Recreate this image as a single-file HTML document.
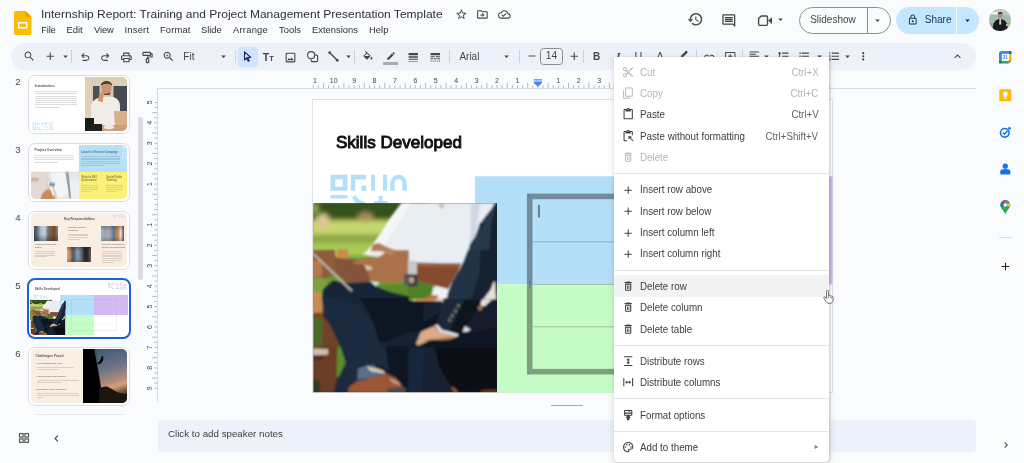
<!DOCTYPE html>
<html lang="en"><head><meta charset="utf-8"><title>Internship Report: Training and Project Management Presentation Template - Google Slides</title>
<style>
*{box-sizing:border-box;margin:0;padding:0}
html,body{width:1024px;height:463px;overflow:hidden;background:#f9fbfd}
body{position:relative;font-family:"Liberation Sans",Arial,sans-serif;color:#444746;-webkit-font-smoothing:antialiased}
#app{position:absolute;left:0;top:0;width:1024px;height:463px;overflow:hidden;will-change:transform}
.abs,.ic,.t{position:absolute}
.ic{display:block;overflow:visible}
.t{white-space:pre;line-height:1}
#title{left:40.8px;top:9.3px;font-size:11.2px;color:#303134;transform-origin:0 50%;transform:scaleX(1.0733)}
.menu{top:25.3px;font-size:9.4px;color:#303134}
#toolbar{left:11px;top:43px;width:965px;height:27px;border-radius:13.5px;background:#edf2fa}
.sep{position:absolute;top:50.4px;width:1px;height:12.6px;background:#cdd1d6}
.tb{font-size:9.6px;color:#444746}
.thumb{position:absolute;left:28.2px;width:101.6px;height:59px;border:1px solid #dadce0;border-radius:7px;background:#fff;overflow:hidden}
.thumb .in{position:absolute;left:1.4px;top:1.4px;right:1.4px;bottom:1.4px;border-radius:5px;overflow:hidden;background:#fff}
.num{position:absolute;left:10px;width:16px;text-align:center;font-size:9.6px;color:#444746;line-height:1}
.tiny{position:absolute;white-space:pre;line-height:1;color:#555}
#cm{position:absolute;left:614.2px;top:56.5px;width:214.8px;height:405px;background:#fff;border-radius:0 0 4px 4px;box-shadow:0 1px 2px rgba(60,64,67,.18),0 2px 6px 2px rgba(60,64,67,.09),1.5px 0 1.5px rgba(60,64,67,.1)}
.mi{position:absolute;left:0;width:100%;height:21.3px}
.mi .lab{position:absolute;left:25.9px;top:5.6px;font-size:10.6px;line-height:1;white-space:pre;color:#3c4043;transform-origin:0 50%;transform:scaleX(.923)}
.mi .sc{position:absolute;right:10.4px;top:5.6px;font-size:10.6px;line-height:1;white-space:pre;color:#5f6368;transform-origin:100% 50%;transform:scaleX(.92)}
.mi.dis .lab,.mi.dis .sc{color:#b1b5ba}
.mi.hl{background:#f1f3f4}
.msep{position:absolute;left:0;width:100%;height:1px;background:#e4e5e7}
</style></head>
<body>
<div id="app">
<!-- header -->
<svg class="ic" style="left:14px;top:10.5px;width:17.5px;height:24px" viewBox="0 0 35 48"><path d="M3.500 0H23l12 12v32.500A3.500 3.500 0 0 1 31.500 48h-28A3.500 3.500 0 0 1 0 44.500v-41A3.500 3.500 0 0 1 3.500 0z" fill="#fbbc04"/><path d="M23 0l12 12H26.500A3.500 3.500 0 0 1 23 8.500z" fill="#f29900"/><path d="M8 22h19v13H8z M10.800 24.800v7.400h13.400v-7.400z" fill="#fff" fill-rule="evenodd"/></svg>
<div class="t" id="title">Internship Report: Training and Project Management Presentation Template</div>
<div class="t menu" style="left:41.2px;letter-spacing:-0.152px">File</div>
<div class="t menu" style="left:66.5px;letter-spacing:-0.039px">Edit</div>
<div class="t menu" style="left:94px;letter-spacing:-0.102px">View</div>
<div class="t menu" style="left:124.5px;letter-spacing:0.216px">Insert</div>
<div class="t menu" style="left:160px;letter-spacing:0.133px">Format</div>
<div class="t menu" style="left:201px;letter-spacing:-0.022px">Slide</div>
<div class="t menu" style="left:233px;letter-spacing:0.234px">Arrange</div>
<div class="t menu" style="left:279px;letter-spacing:0.022px">Tools</div>
<div class="t menu" style="left:312px;letter-spacing:0.014px">Extensions</div>
<div class="t menu" style="left:369px;letter-spacing:0.055px">Help</div>
<svg class="ic" style="left:454.60px;top:8.10px;width:12.8px;height:12.8px" viewBox="0 0 24 24"><path fill="#444746" d="M22 9.24l-7.19-.62L12 2 9.19 8.63 2 9.24l5.46 4.73L5.82 21 12 17.27 18.18 21l-1.63-7.03L22 9.24zM12 15.4l-3.76 2.27 1-4.28-3.32-2.88 4.38-.38L12 6.1l1.71 4.04 4.38.38-3.32 2.88 1 4.28L12 15.4z"/></svg>
<svg class="ic" style="left:476.20px;top:8.20px;width:12.8px;height:12.8px" viewBox="0 0 24 24"><path fill="#444746" d="M20 6h-8l-2-2H4c-1.1 0-1.99.9-1.99 2L2 18c0 1.1.9 2 2 2h16c1.1 0 2-.9 2-2V8c0-1.1-.9-2-2-2zm0 12H4V6h5.17l2 2H20v10zm-8-1l4-4-4-4v3H8v2h4v3z"/></svg>
<svg class="ic" style="left:497.60px;top:8.20px;width:12.8px;height:12.8px" viewBox="0 0 24 24"><path fill="#444746" d="M19.35 10.04C18.67 6.59 15.64 4 12 4 9.11 4 6.6 5.64 5.35 8.04 2.34 8.36 0 10.91 0 14c0 3.31 2.69 6 6 6h13c2.76 0 5-2.24 5-5 0-2.64-2.05-4.78-4.65-4.96zM19 18H6c-2.21 0-4-1.79-4-4 0-2.05 1.53-3.76 3.56-3.97l1.07-.11.5-.95C8.08 7.14 9.94 6 12 6c2.62 0 4.88 1.86 5.39 4.43l.3 1.5 1.53.11c1.56.1 2.78 1.41 2.78 2.96 0 1.65-1.35 3-3 3zm-9-3.82l-2.09-2.09L6.5 13.5 10 17l6.01-6.01-1.41-1.41z"/></svg>
<svg class="ic" style="left:687.30px;top:11.30px;width:16.6px;height:16.6px" viewBox="0 0 24 24"><path fill="#444746" d="M13 3c-4.97 0-9 4.03-9 9H1l3.89 3.89.07.14L9 12H6c0-3.87 3.13-7 7-7s7 3.13 7 7-3.13 7-7 7c-1.93 0-3.68-.79-4.94-2.06l-1.42 1.42C8.27 19.99 10.51 21 13 21c4.97 0 9-4.03 9-9s-4.03-9-9-9zm-1 5v5l4.28 2.54.72-1.21-3.5-2.08V8H12z"/></svg>
<svg class="ic" style="left:720.80px;top:12.80px;width:15.6px;height:15.6px" viewBox="0 0 24 24"><path fill="#444746" d="M21.99 4c0-1.1-.89-2-1.99-2H4c-1.1 0-2 .9-2 2v12c0 1.1.9 2 2 2h14l4 4-.01-18zM20 4v13.17L18.83 16H4V4h16zM6 12h12v2H6zm0-3h12v2H6zm0-3h12v2H6z"/></svg>
<svg class="ic" style="left:756px;top:13px;width:18px;height:15px" viewBox="756 13 18 15"><path d="M761.200 16H766.300Q767.500 16 767.500 17.200V24.100Q767.500 25.300 766.300 25.300H759.800Q758.600 25.300 758.600 24.100V18.600Z" fill="none" stroke="#444746" stroke-width="1.350" stroke-linejoin="round"/><path d="M768.100 20.500L772 17.300V23.900Z" fill="#444746"/></svg>
<svg class="ic" style="left:775.20px;top:14.30px;width:11px;height:11px" viewBox="0 0 24 24"><path fill="#444746" d="M7 10l5 5 5-5z"/></svg>
<div class="abs" style="left:799.2px;top:6.8px;width:91.4px;height:26.6px;border:1px solid #8e918f;border-radius:13.5px;height:27px"></div>
<div class="abs" style="left:866.6px;top:7px;width:1px;height:26px;background:#8e918f"></div>
<div class="t" style="left:810.2px;top:15.1px;font-size:10px;color:#444746">Slideshow</div>
<svg class="ic" style="left:872.20px;top:14.50px;width:11px;height:11px" viewBox="0 0 24 24"><path fill="#444746" d="M7 10l5 5 5-5z"/></svg>
<div class="abs" style="left:896.2px;top:6.8px;width:82.6px;height:27px;border-radius:13.5px;background:#c2e7ff"></div>
<div class="abs" style="left:956px;top:6.8px;width:1px;height:27px;background:#f9fbfd"></div>
<svg class="ic" style="left:907.15px;top:14.05px;width:11.5px;height:11.5px" viewBox="0 0 24 24"><path fill="#22364e" d="M18 8h-1V6c0-2.76-2.24-5-5-5S7 3.24 7 6v2H6c-1.1 0-2 .9-2 2v10c0 1.1.9 2 2 2h12c1.1 0 2-.9 2-2V10c0-1.1-.9-2-2-2zM9 6c0-1.66 1.34-3 3-3s3 1.34 3 3v2H9V6zm9 14H6V10h12v10zm-6-3c1.1 0 2-.9 2-2s-.9-2-2-2-2 .9-2 2 .9 2 2 2z"/></svg>
<div class="t" style="left:924.8px;top:15.1px;font-size:10px;color:#22364e">Share</div>
<svg class="ic" style="left:961.80px;top:14.70px;width:11px;height:11px" viewBox="0 0 24 24"><path fill="#12263e" d="M7 10l5 5 5-5z"/></svg>
<svg class="ic" style="left:989px;top:9.300px;width:22px;height:22px" viewBox="0 0 22 22"><defs><clipPath id="av"><circle cx="11" cy="11" r="10.900"/></clipPath><filter id="avb"><feGaussianBlur stdDeviation="0.450"/></filter></defs><g clip-path="url(#av)"><rect width="22" height="22" fill="#a3bdb2"/><g filter="url(#avb)"><rect x="0" y="0" width="22" height="6" fill="#b9cfc6"/><rect x="2" y="3" width="7" height="2.200" fill="#eef1ee"/><rect x="0" y="14" width="22" height="8" fill="#8fa79c"/><path d="M3.500 22c0-8 2.500-12 7.700-12s7.700 4 7.700 12z" fill="#1c1e21"/><ellipse cx="11.200" cy="6.300" rx="2.300" ry="3" fill="#b48a72"/><path d="M8.800 5.300c0-3.200 4.800-3.200 4.800 0c-1-1-3.800-1-4.800 0z" fill="#2a2320"/><path d="M10.500 9.600h1.500l.3 6h-2.100z" fill="#c9ccd0"/><rect x="17" y="15" width="3" height="2" fill="#d8c060"/></g></g></svg>
<!-- toolbar -->
<div class="abs" id="toolbar"></div>
<div class="abs" style="left:238px;top:47px;width:19.600px;height:19.600px;border-radius:3.500px;background:#d3e3fd"></div>
<div class="sep" style="left:71.0px"></div>
<div class="sep" style="left:234.5px"></div>
<div class="sep" style="left:354.4px"></div>
<div class="sep" style="left:448.8px"></div>
<div class="sep" style="left:518.8px"></div>
<div class="sep" style="left:583.1px"></div>
<div class="sep" style="left:696.0px"></div>
<div class="sep" style="left:741.9px"></div>
<svg class="ic" style="left:22.55px;top:50.15px;width:12.5px;height:12.5px" viewBox="0 0 24 24"><path fill="#444746" d="M15.5 14h-.79l-.28-.27C15.41 12.59 16 11.11 16 9.5 16 5.91 13.09 3 9.5 3S3 5.91 3 9.5 5.91 16 9.5 16c1.61 0 3.09-.59 4.23-1.57l.27.28v.79l5 4.99L20.49 19l-4.99-5zm-6 0C7.01 14 5 11.99 5 9.5S7.01 5 9.5 5 14 7.01 14 9.5 11.99 14 9.5 14z"/></svg>
<svg class="ic" style="left:44.35px;top:50.15px;width:12.5px;height:12.5px" viewBox="0 0 24 24"><path fill="#444746" d="M19 13h-6v6h-2v-6H5v-2h6V5h2v6h6v2z"/></svg>
<svg class="ic" style="left:59.50px;top:50.90px;width:11px;height:11px" viewBox="0 0 24 24"><path fill="#444746" d="M7 10l5 5 5-5z"/></svg>
<svg class="ic" style="left:78.55px;top:50.55px;width:12.5px;height:12.5px" viewBox="0 0 24 24"><path fill="#444746" d="M7 19v-2h7.1q1.575 0 2.738-1T18 13.5 16.838 11 14.1 10H7.8l2.6 2.6L9 14 4 9l5-5 1.4 1.4L7.8 8h6.3q2.425 0 4.163 1.575T20 13.5t-1.737 3.925T14.1 19z"/></svg>
<svg class="ic" style="left:99.15px;top:50.55px;width:12.5px;height:12.5px" viewBox="0 0 24 24"><path fill="#444746" d="M17 19v-2H9.9q-1.575 0-2.738-1T6 13.5 7.163 11 9.9 10h6.3l-2.6 2.6L15 14l5-5-5-5-1.4 1.4L16.2 8H9.9Q7.475 8 5.738 9.575T4 13.5t1.737 3.925T9.9 19z"/></svg>
<svg class="ic" style="left:120.20px;top:50.50px;width:12.8px;height:12.8px" viewBox="0 0 24 24"><path fill="#444746" d="M19 8h-1V3H6v5H5c-1.66 0-3 1.34-3 3v6h4v4h12v-4h4v-6c0-1.66-1.34-3-3-3zM8 5h8v3H8V5zm8 12v2H8v-4h8v2zm2-2v-2H6v2H4v-4c0-.55.45-1 1-1h14c.55 0 1 .45 1 1v4h-2z M17 11.5a1 1 0 1 0 2 0a1 1 0 1 0-2 0z"/></svg>
<svg class="ic" style="left:140.7px;top:50.6px;width:13px;height:13px" viewBox="0 0 24 24"><g fill="none" stroke="#444746" stroke-width="2.100" stroke-linejoin="round"><rect x="3.500" y="2.500" width="14" height="5.500" rx="1.300"/><path d="M17.500 5.200H20.500V11H12V14"/><rect x="9.800" y="14" width="4.400" height="7.500" rx="1.200"/></g></svg>
<svg class="ic" style="left:162.40px;top:50.20px;width:13px;height:13px" viewBox="0 0 24 24"><path fill="#444746" d="M15.5 14h-.79l-.28-.27C15.41 12.59 16 11.11 16 9.5 16 5.91 13.09 3 9.5 3S3 5.91 3 9.5 5.91 16 9.5 16c1.61 0 3.09-.59 4.23-1.57l.27.28v.79l5 4.99L20.49 19l-4.99-5zm-6 0C7.01 14 5 11.99 5 9.5S7.01 5 9.5 5 14 7.01 14 9.5 11.99 14 9.5 14zm.5-7H9v2H7v1h2v2h1v-2h2V9h-2z"/></svg>
<div class="t tb" style="left:183.300px;top:52px;font-size:10.200px">Fit</div>
<svg class="ic" style="left:217.50px;top:50.90px;width:11px;height:11px" viewBox="0 0 24 24"><path fill="#444746" d="M7 10l5 5 5-5z"/></svg>
<svg class="ic" style="left:241.1px;top:50.4px;width:13px;height:13px" viewBox="0 0 24 24"><path d="M6.500 3.500v15l4-3.800 2.800 6 2-.9-2.800-6H18z" fill="none" stroke="#1b2a6b" stroke-width="2.200" stroke-linejoin="round"/></svg>
<div class="t" style="left:262.800px;top:51.600px;font-size:10.600px;font-weight:bold;color:#444746">T<span style="font-size:7.600px">T</span></div>
<svg class="ic" style="left:283.50px;top:50.60px;width:13px;height:13px" viewBox="0 0 24 24"><path fill="#444746" d="M19 5v14H5V5h14m0-2H5c-1.1 0-2 .9-2 2v14c0 1.1.9 2 2 2h14c1.1 0 2-.9 2-2V5c0-1.1-.9-2-2-2zm-4.86 8.86l-3 3.87L9 13.14 6 17h12l-3.86-5.14z"/></svg>
<svg class="ic" style="left:305.9px;top:49.9px;width:13px;height:13px" viewBox="0 0 24 24"><circle cx="9.500" cy="9.500" r="6.500" fill="none" stroke="#444746" stroke-width="2"/><path d="M17 9.500h2.500a2 2 0 0 1 2 2v8a2 2 0 0 1-2 2h-8a2 2 0 0 1-2-2V17" fill="none" stroke="#444746" stroke-width="2"/></svg>
<svg class="ic" style="left:327.1px;top:49.9px;width:13px;height:13px" viewBox="0 0 24 24"><path d="M5 5L19 19" stroke="#444746" stroke-width="2.600"/><circle cx="5" cy="5" r="2.600" fill="#444746"/><circle cx="19" cy="19" r="2.600" fill="#444746"/></svg>
<svg class="ic" style="left:342.70px;top:50.90px;width:11px;height:11px" viewBox="0 0 24 24"><path fill="#444746" d="M7 10l5 5 5-5z"/></svg>
<svg class="ic" style="left:362.00px;top:51.00px;width:12px;height:12px" viewBox="0 0 24 24"><path fill="#444746" d="M16.56 8.94L7.62 0 6.21 1.41l2.38 2.38-5.15 5.15c-.59.59-.59 1.54 0 2.12l5.5 5.5c.29.29.68.44 1.06.44s.77-.15 1.06-.44l5.5-5.5c.59-.58.59-1.53 0-2.12zM5.21 10L10 5.21 14.79 10H5.21zM19 11.5s-2 2.17-2 3.5c0 1.1.9 2 2 2s2-.9 2-2c0-1.33-2-3.5-2-3.5z"/></svg>
<svg class="ic" style="left:385.80px;top:50.90px;width:10px;height:10px" viewBox="0 0 24 24"><path fill="#444746" d="M3 17.25V21h3.75L17.81 9.94l-3.75-3.75L3 17.25zM20.71 7.04c.39-.39.39-1.02 0-1.41l-2.34-2.34c-.39-.39-1.02-.39-1.41 0l-1.83 1.83 3.75 3.75 1.83-1.83z"/></svg>
<div class="abs" style="left:383.200px;top:62.200px;width:15px;height:2.400px;background:#a9acb0"></div>
<svg class="ic" style="left:406.95px;top:50.75px;width:12.5px;height:12.5px" viewBox="0 0 24 24"><path fill="#444746" d="M3 17h18v-2H3v2zm0 3h18v-1H3v1zm0-7h18v-3H3v3zm0-9v4h18V4H3z"/></svg>
<svg class="ic" style="left:429.35px;top:50.75px;width:12.5px;height:12.5px" viewBox="0 0 24 24"><path fill="#444746" d="M3 16h5v-2H3v2zm6.5 0h5v-2h-5v2zm6.5 0h5v-2h-5v2zM3 20h2v-2H3v2zm4 0h2v-2H7v2zm4 0h2v-2h-2v2zm4 0h2v-2h-2v2zm4 0h2v-2h-2v2zM3 12h8v-2H3v2zm10 0h8v-2h-8v2zM3 4v4h18V4H3z"/></svg>
<div class="t tb" style="left:459.400px;top:51.500px;font-size:10px">Arial</div>
<svg class="ic" style="left:501.10px;top:50.50px;width:11px;height:11px" viewBox="0 0 24 24"><path fill="#444746" d="M7 10l5 5 5-5z"/></svg>
<svg class="ic" style="left:525.50px;top:50.40px;width:12px;height:12px" viewBox="0 0 24 24"><path fill="#444746" d="M19 13H5v-2h14v2z"/></svg>
<div class="abs" style="left:540px;top:48.200px;width:22.800px;height:16.400px;border:1px solid #8a8d90;border-radius:3.500px"></div>
<div class="t tb" style="left:540px;top:51.300px;width:22.800px;text-align:center;font-size:10.200px">14</div>
<svg class="ic" style="left:567.75px;top:50.15px;width:12.5px;height:12.5px" viewBox="0 0 24 24"><path fill="#444746" d="M19 13h-6v6h-2v-6H5v-2h6V5h2v6h6v2z"/></svg>
<div class="t" style="left:592.900px;top:51.700px;font-size:10px;font-weight:bold;color:#444746">B</div>
<div class="t" style="left:616.200px;top:51.200px;font-size:10.800px;font-style:italic;font-family:'Liberation Serif',serif;font-weight:bold;color:#444746">I</div>
<div class="t" style="left:634.600px;top:51.200px;font-size:10.800px;text-decoration:underline;color:#444746">U</div>
<div class="t" style="left:656.600px;top:50.600px;font-size:10.800px;color:#444746">A</div>
<svg class="ic" style="left:677.25px;top:49.15px;width:12.5px;height:12.5px" viewBox="0 0 24 24"><path fill="#444746" d="M17.750 3 21 6.250 10.500 16.750 7.250 13.500zM6.200 14.600l3.200 3.200-1.600 1.600H4.600l-.8-.8z"/></svg>
<svg class="ic" style="left:702.75px;top:50.65px;width:12.5px;height:12.5px" viewBox="0 0 24 24"><path fill="#444746" d="M3.9 12c0-1.71 1.39-3.1 3.1-3.1h4V7H7c-2.76 0-5 2.24-5 5s2.24 5 5 5h4v-1.9H7c-1.71 0-3.1-1.39-3.1-3.1zM8 13h8v-2H8v2zm9-6h-4v1.9h4c1.71 0 3.1 1.39 3.1 3.1s-1.39 3.1-3.1 3.1h-4V17h4c2.76 0 5-2.24 5-5s-2.24-5-5-5z"/></svg>
<svg class="ic" style="left:723.75px;top:50.65px;width:12.5px;height:12.5px" viewBox="0 0 24 24"><path fill="#444746" d="M20 2H4c-1.1 0-2 .9-2 2v12c0 1.1.9 2 2 2h14l4 4V4c0-1.1-.9-2-2-2zm0 15.17L18.83 16H4V4h16v13.17zM11 14h2v-3h3V9h-3V6h-2v3H8v2h3z"/></svg>
<svg class="ic" style="left:748.25px;top:50.15px;width:12.5px;height:12.5px" viewBox="0 0 24 24"><path fill="#444746" d="M15 15H3v2h12v-2zm0-8H3v2h12V7zM3 13h18v-2H3v2zm0 8h18v-2H3v2zM3 3v2h18V3H3z"/></svg>
<svg class="ic" style="left:761.00px;top:50.90px;width:11px;height:11px" viewBox="0 0 24 24"><path fill="#444746" d="M7 10l5 5 5-5z"/></svg>
<svg class="ic" style="left:776.75px;top:50.15px;width:12.5px;height:12.5px" viewBox="0 0 24 24"><path fill="#444746" d="M6 7h2.5L5 3.5 1.5 7H4v10H1.5L5 20.5 8.5 17H6V7zm4-2v2h12V5H10zm0 14h12v-2H10v2zm0-6h12v-2H10v2z"/></svg>
<svg class="ic" style="left:797.75px;top:50.15px;width:12.5px;height:12.5px" viewBox="0 0 24 24"><path fill="#444746" d="M4 10.5c-.83 0-1.5.67-1.5 1.5s.67 1.5 1.5 1.5 1.5-.67 1.5-1.5-.67-1.5-1.5-1.5zm0-6c-.83 0-1.5.67-1.5 1.5S3.17 7.5 4 7.5 5.5 6.83 5.5 6 4.83 4.5 4 4.5zm0 12c-.83 0-1.5.68-1.5 1.5s.68 1.5 1.5 1.5 1.5-.68 1.5-1.5-.67-1.5-1.5-1.5zM7 19h14v-2H7v2zm0-6h14v-2H7v2zm0-8v2h14V5H7z"/></svg>
<svg class="ic" style="left:813.50px;top:50.90px;width:11px;height:11px" viewBox="0 0 24 24"><path fill="#444746" d="M7 10l5 5 5-5z"/></svg>
<svg class="ic" style="left:828.05px;top:50.15px;width:12.5px;height:12.5px" viewBox="0 0 24 24"><path fill="#444746" d="M2 17h2v.5H3v1h1v.5H2v1h3v-4H2v1zm1-9h1V4H2v1h1v3zm-1 3h1.8L2 13.1v.9h3v-1H3.2L5 10.9V10H2v1zm5-6v2h14V5H7zm0 14h14v-2H7v2zm0-6h14v-2H7v2z"/></svg>
<svg class="ic" style="left:842.00px;top:50.90px;width:11px;height:11px" viewBox="0 0 24 24"><path fill="#444746" d="M7 10l5 5 5-5z"/></svg>
<svg class="ic" style="left:856.75px;top:50.15px;width:12.5px;height:12.5px" viewBox="0 0 24 24"><path fill="#444746" d="M12 8c1.1 0 2-.9 2-2s-.9-2-2-2-2 .9-2 2 .9 2 2 2zm0 2c-1.1 0-2 .9-2 2s.9 2 2 2 2-.9 2-2-.9-2-2-2zm0 6c-1.1 0-2 .9-2 2s.9 2 2 2 2-.9 2-2-.9-2-2-2z"/></svg>
<svg class="ic" style="left:951.00px;top:49.90px;width:13px;height:13px" viewBox="0 0 24 24"><path fill="#444746" d="M12 8l-6 6 1.41 1.41L12 10.83l4.59 4.58L18 14z"/></svg>
<!-- filmstrip -->
<div class="num" style="top:77.3px">2</div>
<div class="num" style="top:145.3px">3</div>
<div class="num" style="top:213.3px">4</div>
<div class="num" style="top:281.3px">5</div>
<div class="num" style="top:349.3px">6</div>
<div class="thumb" style="top:74.7px"><div class="in"><div class="tiny" style="left:4.100px;top:7.800px;font-size:3.400px;font-weight:bold">Introduction</div><div class="abs" style="left:4.1px;top:14.20px;width:42.0px;height:0.9px;background:#dedede"></div><div class="abs" style="left:4.1px;top:16.40px;width:42.0px;height:0.9px;background:#dedede"></div><div class="abs" style="left:4.1px;top:18.60px;width:42.0px;height:0.9px;background:#dedede"></div><div class="abs" style="left:4.1px;top:20.80px;width:42.0px;height:0.9px;background:#dedede"></div><div class="abs" style="left:4.1px;top:23.00px;width:42.0px;height:0.9px;background:#dedede"></div><div class="abs" style="left:4.1px;top:25.20px;width:42.0px;height:0.9px;background:#dedede"></div><div class="abs" style="left:4.1px;top:27.40px;width:42.0px;height:0.9px;background:#dedede"></div><div class="abs" style="left:4.1px;top:29.60px;width:25.2px;height:0.9px;background:#dedede"></div><svg class="ic" style="left:1.400px;top:45.200px;width:23px;height:8px" viewBox="0 0 24 9" preserveAspectRatio="none"><g fill="none" stroke="#b5dff7" stroke-width="0.9"><path d="M1 0v4M3.500 0v4M6 4V1.500h2.500M11 0v4M13 1.500h3M14.500 0v3.500M18 0v2a1.500 1.500 0 0 0 3 0V0"/><path d="M1 5.500h2.500v3H1zM5.500 5.500v3M7.500 5.500v3h3M12 5.500v3M14 5.500h3M14 8.500h3M19 5.500h3.500M19 8.500h3.500M19 5.500v3"/></g></svg><svg class="ic" style="left:54.200px;top:0;width:43px;height:55px" viewBox="0 0 43 55" preserveAspectRatio="none"><defs><filter id="b2"><feGaussianBlur stdDeviation="0.7"/></filter></defs><rect width="43" height="55" fill="#dcc8b0"/><g filter="url(#b2)"><rect x="0" y="0" width="43" height="10" fill="#dccdb9"/><rect x="8" y="9" width="34" height="24" fill="#4a5156"/><rect x="29" y="9" width="13" height="28" fill="#454c52"/><rect x="14.500" y="9" width="14" height="30" fill="#d8c4ac"/><rect x="0" y="0" width="6" height="55" fill="#e2cfb8"/><path d="M6 55V30c0-6 5-9 11-10l9-.5c6 1 9 4 9 10v16l-8 9z" fill="#f2ece6"/><ellipse cx="21.500" cy="11" rx="5.200" ry="6.500" fill="#c99872"/><path d="M15.800 9c0-6 11-7 11.400 0c-3-3-8-3-11.400 0z" fill="#5b3a22"/><path d="M18 14.500c1 3 6 3 7.500 0l-.5 3.500h-6z" fill="#6d4628"/><path d="M13 24c0-5 3-9 5.500-11l1.500 3c-2 3-2 6-2 9z" fill="#c99872"/><path d="M29 34h14v15H30z" fill="#d8b088"/><rect x="0" y="48" width="43" height="7" fill="#c8a27c"/><path d="M0 41h9v14H0z" fill="#1d1b18"/><path d="M5 47h12v8H3z" fill="#22201c"/><ellipse cx="24" cy="50" rx="5" ry="2.200" fill="#efe9e2"/></g></svg></div></div>
<div class="thumb" style="top:142.7px"><div class="in"><div class="tiny" style="left:3.800px;top:4px;font-size:3.400px;font-weight:bold">Project Overview</div><div class="abs" style="left:3.8px;top:10.00px;width:40.0px;height:0.9px;background:#dedede"></div><div class="abs" style="left:3.8px;top:12.20px;width:40.0px;height:0.9px;background:#dedede"></div><div class="abs" style="left:3.8px;top:14.40px;width:40.0px;height:0.9px;background:#dedede"></div><div class="abs" style="left:3.8px;top:16.60px;width:24.0px;height:0.9px;background:#dedede"></div><div class="abs" style="left:48px;top:0;width:49.600px;height:27.200px;background:#b5e0f8"></div><div class="abs" style="left:48px;top:27.200px;width:49.600px;height:28px;background:#fbf078"></div><div class="tiny" style="left:50.600px;top:6.600px;font-size:2.600px;font-weight:bold;color:#5a7486">Launch of Summer Campaign</div><div class="abs" style="left:50.6px;top:10.60px;width:39.0px;height:0.6px;background:#9cc6de"></div><div class="abs" style="left:50.6px;top:12.50px;width:39.0px;height:0.6px;background:#9cc6de"></div><div class="abs" style="left:50.6px;top:14.40px;width:39.0px;height:0.6px;background:#9cc6de"></div><div class="abs" style="left:50.6px;top:16.30px;width:39.0px;height:0.6px;background:#9cc6de"></div><div class="abs" style="left:50.6px;top:18.20px;width:39.0px;height:0.6px;background:#9cc6de"></div><div class="abs" style="left:50.6px;top:20.10px;width:23.4px;height:0.6px;background:#9cc6de"></div><div class="tiny" style="left:50.600px;top:32.400px;font-size:2.600px;font-weight:bold;line-height:1.15;color:#8a8448">Website SEO
Optimization</div><div class="tiny" style="left:75.600px;top:32.400px;font-size:2.600px;font-weight:bold;line-height:1.15;color:#8a8448">Social Media
Tracking</div><div class="abs" style="left:50.6px;top:39.80px;width:17.0px;height:0.6px;background:#e0d566"></div><div class="abs" style="left:50.6px;top:41.70px;width:17.0px;height:0.6px;background:#e0d566"></div><div class="abs" style="left:50.6px;top:43.60px;width:17.0px;height:0.6px;background:#e0d566"></div><div class="abs" style="left:50.6px;top:45.50px;width:10.2px;height:0.6px;background:#e0d566"></div><div class="abs" style="left:75.6px;top:39.80px;width:17.0px;height:0.6px;background:#e0d566"></div><div class="abs" style="left:75.6px;top:41.70px;width:17.0px;height:0.6px;background:#e0d566"></div><div class="abs" style="left:75.6px;top:43.60px;width:17.0px;height:0.6px;background:#e0d566"></div><div class="abs" style="left:75.6px;top:45.50px;width:10.2px;height:0.6px;background:#e0d566"></div><svg class="ic" style="left:90px;top:1px;width:8px;height:14px" viewBox="0 0 8 14"><g fill="none" stroke="#e4f3fc" stroke-width="0.9"><path d="M1 1h4M3 0v5M6.500 2v5M1 7h4M2 9v4M4.500 9.500c2 0 2 3 0 3"/></g></svg><svg class="ic" style="left:0;top:27.200px;width:48px;height:28px" viewBox="0 0 50 28" preserveAspectRatio="none"><defs><filter id="b3"><feGaussianBlur stdDeviation="0.8"/></filter></defs><rect width="50" height="28" fill="#d9d2cc"/><g filter="url(#b3)"><rect x="0" y="0" width="16" height="28" fill="#e3dad3"/><path d="M16 0h34v28H30z" fill="#e6e7e9"/><path d="M20 2l14-3 6 22-12 6z" fill="#f3f4f5"/><path d="M36 0l3 0 4 26-3 1z" fill="#9b9ea4"/><path d="M40 8h10v20H42z" fill="#eef0f2"/><path d="M10 28c0-6 4-10 9-11l5 2 1 9z" fill="#c98a5a"/><path d="M17 10l2-1 6 14-2 1z" fill="#f6f6f6"/><rect x="0" y="6" width="8" height="3" fill="#d0a88c"/><rect x="19" y="11" width="6" height="3" fill="#5f7f97"/></g></svg></div></div>
<div class="thumb" style="top:210.7px"><div class="in" style="background:#f8eee4"><div class="tiny" style="left:0;width:97.800px;text-align:center;top:4.800px;font-size:3.200px;font-weight:bold">Key Responsibilities</div><svg class="ic" style="left:82px;top:2.2px;width:13px;height:2.4px" viewBox="0 0 23 4" preserveAspectRatio="none"><path fill="#dcc9f4" fill-rule="evenodd" d="M0 0h3v4h-3zM1 1v2h1v-2z M4.500 0h3.500v1h-2.500v3h-1z M9.500 0h1v4h-1z M12 0h1v4h-1z M14.500 4v-2a1.700 1.700 0 0 1 3.400 0v2h-1v-2a.7.7 0 0 0-1.400 0v2z M19.500 0h1v3h2.500v1h-3.500z"/></svg><div class="abs" style="left:3.4px;top:12.6px;width:23.6px;height:15px;background:linear-gradient(180deg,rgba(0,0,0,0) 55%,rgba(30,34,40,.45) 100%),linear-gradient(90deg,#3f4a55 0%,#5a6875 12%,#b4c4d4 30%,#c4d0dc 46%,#6b7680 58%,#8a5a3c 70%,#6e4a35 85%,#7f8890 100%)"></div><div class="abs" style="left:70.2px;top:12.6px;width:23.6px;height:15px;background:linear-gradient(180deg,rgba(60,50,40,.35) 0%,rgba(0,0,0,0) 35%,rgba(0,0,0,0) 70%,rgba(40,40,50,.3) 100%),linear-gradient(90deg,#a8b8c8 0%,#8aa4c0 20%,#c8a890 30%,#7a98bc 45%,#5a7aa0 55%,#b87848 65%,#c8906a 75%,#e8e0d8 86%,#5a4a42 100%)"></div><div class="abs" style="left:36.6px;top:34px;width:23.4px;height:15px;background:linear-gradient(180deg,rgba(20,20,24,.35) 0%,rgba(0,0,0,0) 30%,rgba(0,0,0,0) 75%,rgba(90,60,40,.4) 100%),linear-gradient(90deg,#e0b080 0%,#c88a50 12%,#4a5866 25%,#8aa0b8 45%,#5a6a7a 60%,#1e2226 75%,#2a2a2c 86%,#8a5a3a 100%)"></div><div class="tiny" style="left:37.500px;top:14px;font-size:2.500px;font-weight:bold;line-height:1.15;color:#8a8078">Digital content
creation</div><div class="abs" style="left:37.5px;top:20.60px;width:20.0px;height:0.6px;background:#dccfc3"></div><div class="abs" style="left:37.5px;top:22.40px;width:20.0px;height:0.6px;background:#dccfc3"></div><div class="abs" style="left:37.5px;top:24.20px;width:20.0px;height:0.6px;background:#dccfc3"></div><div class="abs" style="left:37.5px;top:26.00px;width:12.0px;height:0.6px;background:#dccfc3"></div><div class="tiny" style="left:4.200px;top:31.400px;font-size:2.500px;font-weight:bold;line-height:1.15;color:#8a8078">Analyzing website
traffic</div><div class="abs" style="left:4.2px;top:38.00px;width:20.0px;height:0.6px;background:#dccfc3"></div><div class="abs" style="left:4.2px;top:39.80px;width:20.0px;height:0.6px;background:#dccfc3"></div><div class="abs" style="left:4.2px;top:41.60px;width:20.0px;height:0.6px;background:#dccfc3"></div><div class="abs" style="left:4.2px;top:43.40px;width:12.0px;height:0.6px;background:#dccfc3"></div><div class="tiny" style="left:71px;top:31.400px;font-size:2.500px;font-weight:bold;line-height:1.15;color:#8a8078">Weekly reporting to
senior management</div><div class="abs" style="left:71px;top:38.00px;width:20.0px;height:0.6px;background:#dccfc3"></div><div class="abs" style="left:71px;top:39.80px;width:20.0px;height:0.6px;background:#dccfc3"></div><div class="abs" style="left:71px;top:41.60px;width:20.0px;height:0.6px;background:#dccfc3"></div><div class="abs" style="left:71px;top:43.40px;width:20.0px;height:0.6px;background:#dccfc3"></div><div class="abs" style="left:71px;top:45.20px;width:20.0px;height:0.6px;background:#dccfc3"></div><div class="abs" style="left:71px;top:47.00px;width:20.0px;height:0.6px;background:#dccfc3"></div><div class="abs" style="left:71px;top:48.80px;width:12.0px;height:0.6px;background:#dccfc3"></div></div></div>
<div class="thumb" style="top:277.59999999999997px;left:27.200px;width:104px;height:61.200px;border:2.200px solid #1a62d6;border-radius:8px"><div class="in" style="left:1.200px;top:1.300px;right:1.200px;bottom:1.300px;border-radius:5px"><div class="tiny" style="left:4.400px;top:6.900px;font-size:3.150px;font-weight:bold">Skills Developed</div><svg class="ic" style="left:77.5px;top:2px;width:18.6px;height:6.7px" viewBox="0 0 23 9.5" preserveAspectRatio="none"><path fill="#d5bdf2" fill-rule="evenodd" d="M0 0h3v4h-3zM1 1v2h1v-2z M4.500 0h3.500v1h-2.500v3h-1z M9.500 0h1v4h-1z M12 0h1v4h-1z M14.500 4v-2a1.700 1.700 0 0 1 3.400 0v2h-1v-2a.7.7 0 0 0-1.400 0v2z M19.500 0h1v3h2.500v1h-3.500z M0 5.500h3.500v1h-3.500z M5 5.500c.5 1.500 1.500 2.500 3 2.800v1c-2-.3-3.500-1.600-4-3.500z M10 7h1.500v-1.500h1v1.500h1.500v1h-4z M15.500 5.500h1v4h-1z M18 5.500h3v1h-2v3h-1z M22 5.500h1v4h-1z"/></svg><svg class="ic" style="left:3.3px;top:14.5px;width:14.3px;height:3.6px" viewBox="0 0 23 4" preserveAspectRatio="none"><path fill="#b5dff7" fill-rule="evenodd" d="M0 0h3v4h-3zM1 1v2h1v-2z M4.500 0h3.500v1h-2.500v3h-1z M9.500 0h1v4h-1z M12 0h1v4h-1z M14.500 4v-2a1.700 1.700 0 0 1 3.400 0v2h-1v-2a.7.7 0 0 0-1.400 0v2z M19.500 0h1v3h2.500v1h-3.500z"/></svg><div class="abs" style="left:30.100px;top:14.200px;width:33.600px;height:19.800px;background:#b3e0f8"></div><div class="abs" style="left:63.700px;top:14.200px;width:33.600px;height:19.800px;background:#d5b9f1"></div><div class="abs" style="left:34px;top:34px;width:29.700px;height:20.800px;background:#c6fdc6"></div><div class="abs" style="left:40.800px;top:17.700px;width:45.600px;height:32.700px;border:.5px solid rgba(120,130,140,.12);background:linear-gradient(rgba(120,130,140,.1),rgba(120,130,140,.1)) 0 8.100px/100% .5px no-repeat,linear-gradient(rgba(120,130,140,.1),rgba(120,130,140,.1)) 0 16.200px/100% .5px no-repeat,linear-gradient(rgba(120,130,140,.1),rgba(120,130,140,.1)) 0 24.300px/100% .5px no-repeat,linear-gradient(rgba(120,130,140,.1),rgba(120,130,140,.1)) 22.700px 0/.5px 100% no-repeat"></div><svg class="ic" style="left:.3px;top:20px;width:34px;height:34.800px" viewBox="0 0 183.600 189" preserveAspectRatio="none"><use href="#photo5"/></svg></div></div>
<div class="thumb" style="top:346.7px"><div class="in" style="background:#f8eee4"><div class="tiny" style="left:4.800px;top:6.300px;font-size:3.300px;font-weight:bold">Challenges Faced</div><div class="tiny" style="left:6px;top:14px;font-size:2.400px;font-weight:bold;color:#8a8078">Low engagement rates</div><div class="abs" style="left:6px;top:17.60px;width:37.0px;height:0.6px;background:#dccfc3"></div><div class="abs" style="left:6px;top:19.60px;width:22.2px;height:0.6px;background:#dccfc3"></div><div class="tiny" style="left:6px;top:27.300px;font-size:2.400px;font-weight:bold;color:#8a8078">Limited Marketing Budget</div><div class="abs" style="left:6px;top:30.90px;width:42.0px;height:0.6px;background:#dccfc3"></div><div class="abs" style="left:6px;top:32.90px;width:25.2px;height:0.6px;background:#dccfc3"></div><div class="tiny" style="left:6px;top:40.200px;font-size:2.400px;font-weight:bold;color:#8a8078">Managing Time effectively</div><div class="abs" style="left:6px;top:43.80px;width:42.0px;height:0.6px;background:#dccfc3"></div><div class="abs" style="left:6px;top:45.80px;width:42.0px;height:0.6px;background:#dccfc3"></div><div class="abs" style="left:6px;top:47.80px;width:6.3px;height:0.6px;background:#dccfc3"></div><svg class="ic" style="left:54px;top:0;width:43.800px;height:55px" viewBox="0 0 44 55" preserveAspectRatio="none"><defs><linearGradient id="sky" x1="0" y1="0" x2="0.250" y2="1"><stop offset="0" stop-color="#3d4f6b"/><stop offset=".45" stop-color="#6a7488"/><stop offset=".72" stop-color="#b58c7c"/><stop offset=".8" stop-color="#d9a07c"/><stop offset="1" stop-color="#3a2a24"/></linearGradient><filter id="b6"><feGaussianBlur stdDeviation="0.5"/></filter></defs><rect width="44" height="55" fill="url(#sky)"/><g filter="url(#b6)"><path d="M-2 -2h11l7 40 0 17H-2z" fill="#060606"/><path d="M14 55V40c3-2 6-3 9-2s8 5 12 6 7 1 9 1v10z" fill="#1a1410"/><path d="M12.500 14l2.500-2.500 2-4.500 1.500.5-.5 4.500-2 2.500-3 1z" fill="#0a0a0c"/></g><path d="M10.500 -1L16 40" stroke="#222" stroke-width=".3"/></svg></div></div>
<div class="abs" style="left:35.600px;top:414px;width:88px;height:1px;background:#e3e5e8"></div>
<svg class="ic" style="left:19.300px;top:433.300px;width:10px;height:10px" viewBox="0 0 10 10"><g fill="none" stroke="#444746" stroke-width="1.050"><rect x=".6" y=".6" width="3.500" height="3.500"/><rect x="5.900" y=".6" width="3.500" height="3.500"/><rect x=".6" y="5.900" width="3.500" height="3.500"/><rect x="5.900" y="5.900" width="3.500" height="3.500"/></g></svg>
<svg class="ic" style="left:49.70px;top:431.70px;width:13px;height:13px" viewBox="0 0 24 24"><path fill="#444746" d="M15.41 7.41L14 6l-6 6 6 6 1.41-1.41L10.83 12z"/></svg>
<div class="abs" style="left:138px;top:117.400px;width:5px;height:162.500px;border-radius:2.500px;background:#dadce0"></div>
<!-- canvas + rulers -->
<div class="abs" style="left:157px;top:88px;width:818.500px;height:314px;border-top:1px solid #d8dbdf;border-left:1px solid #d8dbdf"></div>
<svg class="ic" style="left:300px;top:74px;width:330px;height:15px" viewBox="300 74 330 15"><g stroke="#a4a8ad" stroke-width="0.800"><path d="M313.28 85.3V88"/><path d="M318.38 85.3V88"/><path d="M323.49 82.9V88"/><path d="M328.59 85.3V88"/><path d="M333.70 85.3V88"/><path d="M338.80 85.3V88"/><path d="M343.91 82.9V88"/><path d="M349.01 85.3V88"/><path d="M354.12 85.3V88"/><path d="M359.22 85.3V88"/><path d="M364.33 82.9V88"/><path d="M369.43 85.3V88"/><path d="M374.54 85.3V88"/><path d="M379.64 85.3V88"/><path d="M384.75 82.9V88"/><path d="M389.85 85.3V88"/><path d="M394.96 85.3V88"/><path d="M400.06 85.3V88"/><path d="M405.17 82.9V88"/><path d="M410.27 85.3V88"/><path d="M415.38 85.3V88"/><path d="M420.48 85.3V88"/><path d="M425.59 82.9V88"/><path d="M430.69 85.3V88"/><path d="M435.80 85.3V88"/><path d="M440.90 85.3V88"/><path d="M446.01 82.9V88"/><path d="M451.11 85.3V88"/><path d="M456.22 85.3V88"/><path d="M461.32 85.3V88"/><path d="M466.43 82.9V88"/><path d="M471.53 85.3V88"/><path d="M476.64 85.3V88"/><path d="M481.75 85.3V88"/><path d="M486.85 82.9V88"/><path d="M491.95 85.3V88"/><path d="M497.06 85.3V88"/><path d="M502.16 85.3V88"/><path d="M507.27 82.9V88"/><path d="M512.38 85.3V88"/><path d="M517.48 85.3V88"/><path d="M522.58 85.3V88"/><path d="M527.69 82.9V88"/><path d="M532.79 85.3V88"/><path d="M537.90 85.3V88"/><path d="M543.00 85.3V88"/><path d="M548.11 82.9V88"/><path d="M553.22 85.3V88"/><path d="M558.32 85.3V88"/><path d="M563.42 85.3V88"/><path d="M568.53 82.9V88"/><path d="M573.63 85.3V88"/><path d="M578.74 85.3V88"/><path d="M583.85 85.3V88"/><path d="M588.95 82.9V88"/><path d="M594.05 85.3V88"/><path d="M599.16 85.3V88"/><path d="M604.26 85.3V88"/><path d="M609.37 82.9V88"/><path d="M614.48 85.3V88"/><path d="M619.58 85.3V88"/><path d="M624.68 85.3V88"/><path d="M629.79 82.9V88"/><path d="M634.89 85.3V88"/><path d="M640.00 85.3V88"/><path d="M645.11 85.3V88"/><path d="M650.21 82.9V88"/><path d="M655.31 85.3V88"/><path d="M660.42 85.3V88"/><path d="M665.52 85.3V88"/><path d="M670.63 82.9V88"/><path d="M675.74 85.3V88"/><path d="M680.84 85.3V88"/><path d="M685.94 85.3V88"/><path d="M691.05 82.9V88"/><path d="M696.15 85.3V88"/><path d="M701.26 85.3V88"/><path d="M706.37 85.3V88"/><path d="M711.47 82.9V88"/><path d="M716.58 85.3V88"/><path d="M721.68 85.3V88"/><path d="M726.78 85.3V88"/><path d="M731.89 82.9V88"/><path d="M737.00 85.3V88"/><path d="M742.10 85.3V88"/><path d="M747.20 85.3V88"/><path d="M752.31 82.9V88"/><path d="M757.41 85.3V88"/><path d="M762.52 85.3V88"/><path d="M767.62 85.3V88"/><path d="M772.73 82.9V88"/><path d="M777.84 85.3V88"/><path d="M782.94 85.3V88"/><path d="M788.04 85.3V88"/><path d="M793.15 82.9V88"/><path d="M798.25 85.3V88"/><path d="M803.36 85.3V88"/><path d="M808.46 85.3V88"/><path d="M813.57 82.9V88"/><path d="M818.67 85.3V88"/><path d="M823.78 85.3V88"/><path d="M828.88 85.3V88"/></g><g font-family="Liberation Sans, Arial, sans-serif" font-size="7" fill="#444746" text-anchor="middle"><text x="314.88" y="83.100">1</text><text x="333.70" y="83.100">10</text><text x="354.12" y="83.100">9</text><text x="374.54" y="83.100">8</text><text x="394.96" y="83.100">7</text><text x="415.38" y="83.100">6</text><text x="435.80" y="83.100">5</text><text x="456.22" y="83.100">4</text><text x="476.64" y="83.100">3</text><text x="497.06" y="83.100">2</text><text x="517.48" y="83.100">1</text><text x="558.32" y="83.100">1</text><text x="578.74" y="83.100">2</text><text x="599.16" y="83.100">3</text><text x="619.58" y="83.100">4</text></g><path d="M533.800 79.300h8.200v1.300h-8.200z M533.800 81.400h8.200v1.600l-4.100 3.800l-4.100-3.800z" fill="#4285f4"/></svg>
<svg class="ic" style="left:144px;top:90px;width:14px;height:312px" viewBox="144 90 14 312"><g stroke="#a4a8ad" stroke-width="0.800"><path d="M154.4 102.40H157"/><path d="M154.4 107.50H157"/><path d="M152.2 112.61H157"/><path d="M154.4 117.71H157"/><path d="M154.4 122.82H157"/><path d="M154.4 127.92H157"/><path d="M152.2 133.03H157"/><path d="M154.4 138.13H157"/><path d="M154.4 143.24H157"/><path d="M154.4 148.34H157"/><path d="M152.2 153.45H157"/><path d="M154.4 158.56H157"/><path d="M154.4 163.66H157"/><path d="M154.4 168.76H157"/><path d="M152.2 173.87H157"/><path d="M154.4 178.97H157"/><path d="M154.4 184.08H157"/><path d="M154.4 189.19H157"/><path d="M152.2 194.29H157"/><path d="M154.4 199.40H157"/><path d="M154.4 204.50H157"/><path d="M154.4 209.60H157"/><path d="M152.2 214.71H157"/><path d="M154.4 219.81H157"/><path d="M154.4 224.92H157"/><path d="M154.4 230.03H157"/><path d="M152.2 235.13H157"/><path d="M154.4 240.24H157"/><path d="M154.4 245.34H157"/><path d="M154.4 250.44H157"/><path d="M152.2 255.55H157"/><path d="M154.4 260.65H157"/><path d="M154.4 265.76H157"/><path d="M154.4 270.87H157"/><path d="M152.2 275.97H157"/><path d="M154.4 281.07H157"/><path d="M154.4 286.18H157"/><path d="M154.4 291.29H157"/><path d="M152.2 296.39H157"/><path d="M154.4 301.50H157"/><path d="M154.4 306.60H157"/><path d="M154.4 311.71H157"/><path d="M152.2 316.81H157"/><path d="M154.4 321.92H157"/><path d="M154.4 327.02H157"/><path d="M154.4 332.12H157"/><path d="M152.2 337.23H157"/><path d="M154.4 342.34H157"/><path d="M154.4 347.44H157"/><path d="M154.4 352.55H157"/><path d="M152.2 357.65H157"/><path d="M154.4 362.75H157"/><path d="M154.4 367.86H157"/><path d="M154.4 372.97H157"/><path d="M152.2 378.07H157"/><path d="M154.4 383.18H157"/><path d="M154.4 388.28H157"/></g><g font-family="Liberation Sans, Arial, sans-serif" font-size="7" fill="#444746" text-anchor="middle"><text transform="translate(152.400 102.40) rotate(-90)" x="0" y="0">5</text><text transform="translate(152.400 122.82) rotate(-90)" x="0" y="0">4</text><text transform="translate(152.400 143.24) rotate(-90)" x="0" y="0">3</text><text transform="translate(152.400 163.66) rotate(-90)" x="0" y="0">2</text><text transform="translate(152.400 184.08) rotate(-90)" x="0" y="0">1</text><text transform="translate(152.400 224.92) rotate(-90)" x="0" y="0">1</text><text transform="translate(152.400 245.34) rotate(-90)" x="0" y="0">2</text><text transform="translate(152.400 265.76) rotate(-90)" x="0" y="0">3</text><text transform="translate(152.400 286.18) rotate(-90)" x="0" y="0">4</text><text transform="translate(152.400 306.60) rotate(-90)" x="0" y="0">5</text><text transform="translate(152.400 327.02) rotate(-90)" x="0" y="0">6</text><text transform="translate(152.400 347.44) rotate(-90)" x="0" y="0">7</text><text transform="translate(152.400 367.86) rotate(-90)" x="0" y="0">8</text><text transform="translate(152.400 388.28) rotate(-90)" x="0" y="0">9</text></g></svg>
<!-- slide -->
<div class="abs" style="left:312.0px;top:99.0px;width:520.5px;height:293.5px;background:#fff;border:1px solid #dfe1e5"></div>
<div class="t" style="left:335.900px;top:133.600px;font-size:17px;color:#111;letter-spacing:.03px;-webkit-text-stroke:.95px #111">Skills Developed</div>
<svg class="ic" style="left:312.5px;top:99.5px;width:519.5px;height:292.5px" viewBox="312.5 99.5 519.5 292.5"><defs><filter id="pb1" x="-5%" y="-5%" width="110%" height="110%"><feGaussianBlur stdDeviation="1.150"/></filter><filter id="pb3" x="-5%" y="-5%" width="110%" height="110%"><feGaussianBlur stdDeviation="2.600"/></filter></defs>
<g transform="translate(300,150)" fill="#b3e0f8"><path fill-rule="evenodd" d="M30.00 24.22H46.88V40.31H30.00z M34.69 28.91V36.25H42.19V28.91z"/><path d="M50.31 24.22H65.62V28.91H54.69V40.31H50.31z"/><rect x="60.94" y="35.16" width="4.69" height="5.16"/><rect x="70.62" y="24.22" width="3.75" height="16.09"/><rect x="82.50" y="24.22" width="4.06" height="16.09"/><path d="M89.84 40.31V32.50a8.20 8.20 0 0 1 16.41 0V40.31H101.88V32.50a3.91 3.91 0 0 0 -7.81 0V40.31z"/><rect x="30.00" y="44.53" width="16.88" height="3.44"/><path d="M51.56 46.88l3.44 -2.19c1.56 3.12 4.69 5.94 9.38 6.88v4.06c-5.62 -0.62 -10.31 -4.06 -12.81 -8.75z"/><path d="M78.12 45.31h4.06v5.31h4.69v3.75h-13.44v-3.75h4.69z"/></g>
<rect x="474.400" y="175.800" width="177.600" height="108" fill="#b3e0f8"/>
<rect x="652" y="175.800" width="180" height="108" fill="#d5b9f1"/>
<rect x="474.400" y="283.800" width="177.600" height="108.200" fill="#c6fdc6"/>
<g fill="none" stroke="rgba(60,64,67,.38)" stroke-width="0.800"><path d="M532 241.300H780M532 284H780M532 326.300H780M656 199V369"/></g>
<rect x="529.200" y="195.900" width="253" height="175.250" fill="none" stroke="rgba(0,0,0,.37)" stroke-width="5.600"/><g fill="#1a73e8"><circle cx="529.300" cy="281.500" r=".8"/><circle cx="529.300" cy="284.200" r=".8"/><circle cx="529.300" cy="286.900" r=".8"/><circle cx="528" cy="194.800" r=".7"/><circle cx="528" cy="372.500" r=".7"/></g>
<rect x="538" y="204.400" width="1" height="12.500" fill="#222"/>
<svg x="312.900" y="202.750" width="183.600" height="189" viewBox="0 0 183.600 189" preserveAspectRatio="none">
<g id="photo5">
<rect x="0" y="0" width="183.600" height="189" fill="#162030"/>
<g filter="url(#pb3)">
<rect x="-6" y="-6" width="120" height="23.500" fill="#35511b"/>
<rect x="-6" y="17" width="120" height="15" fill="#c6d86c"/>
<rect x="-6" y="31" width="120" height="10" fill="#8fa646"/>
<rect x="-6" y="40" width="130" height="14" fill="#a8cb55"/>
<rect x="-6" y="53" width="150" height="50" fill="#6a9a30"/>
<ellipse cx="9.5" cy="18.9" rx="7.3" ry="8.3" fill="#dcc88e"/>
<ellipse cx="52.0" cy="13.8" rx="8.3" ry="4.7" fill="#a38d5c"/>
<ellipse cx="1.2" cy="5.5" rx="4.1" ry="6.2" fill="#86a843"/>
</g>
<g filter="url(#pb1)">
<polygon points="23.5,46.2 34.9,46.2 34.3,56.1 24.0,55.5" fill="#d08a44"/>
<polygon points="-0.9,88.2 7.9,88.7 8.4,96.0 -0.9,96.0" fill="#cf8a4c"/>
<polygon points="-0.9,74.2 12.6,75.2 12.1,88.7 -0.9,88.2" fill="#7fa23f"/>
<polygon points="-0.9,94.7 8.6,94.7 9.5,109.8 -0.9,110.8" fill="#c98c56"/>
<polygon points="-0.9,109.8 10.0,109.2 10.5,114.9 -0.9,114.9" fill="#7a4528"/>
<polygon points="-0.9,114.4 9.5,114.4 9.5,144.0 -0.9,144.0" fill="#4a6a26"/>
<polygon points="8.4,110.8 17.2,122.2 25.5,139.8 26.1,144.0 8.9,144.0" fill="#70432a"/>
<polygon points="-0.9,142.7 25.5,142.7 24.5,172.3 20.4,189.4 -0.9,189.4" fill="#6b3d26"/>
<polygon points="-0.9,145.1 14.7,145.8 14.7,151.5 -0.9,152.1" fill="#cdbcae"/>
<polygon points="-0.9,152.4 9.5,152.6 9.5,157.2 -0.9,157.2" fill="#5a2f1c"/>
<polygon points="24.0,142.7 27.6,143.2 32.3,159.8 25.5,174.4 23.2,172.8" fill="#5c8c2a"/>
<polygon points="-0.9,176.4 6.6,176.4 6.6,189.4 -0.9,189.4" fill="#2c3c1c"/>
<polygon points="88.5,-0.8 190.9,-0.8 184.7,5.5 177.4,15.8 173.3,22.1 169.1,33.5 163.9,40.7 161.9,48.0 156.7,61.5 152.5,71.8 146.3,82.2 142.2,89.4 123.5,86.3 109.0,61.5 48.9,51.1 54.0,47.2 61.3,38.6 69.6,26.2 76.9,14.8" fill="#e9eef3"/>
<polygon points="88.5,-0.8 98.6,-0.8 85.1,20.0 73.7,38.6 65.4,48.0 55.1,51.1 54.0,47.2 61.3,38.6 69.6,26.2 76.9,14.8" fill="#f4f6f8"/>
<polygon points="157.3,-0.8 167.7,-0.8 163.5,20.0 161.4,33.5 156.3,40.7 157.3,23.1" fill="#cfd8e2"/>
<polygon points="125.2,0.3 131.4,0.3 129.8,5.5 126.2,5.0" fill="#d8bfa6"/>
<polygon points="55.1,77.8 66.0,79.2 61.8,83.7 55.9,82.7" fill="#e8edf2"/>
<polygon points="119.5,83.7 135.0,86.4 133.7,96.0 117.4,96.0" fill="#eef1f5"/>
<polygon points="99.2,94.7 131.4,94.7 130.9,98.4 100.3,98.6" fill="#e0d0c0"/>
<polygon points="101.3,96.3 122.1,96.3 121.0,99.4 102.4,99.4" fill="#d98a4a"/>
<polygon points="63.4,82.5 95.5,80.2 95.5,93.4 77.9,88.9" fill="#5a8a2a"/>
<polygon points="94.6,78.4 104.4,77.3 120.0,83.0 117.4,96.0 94.6,96.0" fill="#4f7f28"/>
<polygon points="113.8,92.0 124.6,92.0 124.1,96.0 113.2,96.0" fill="#b5703a"/>
<polygon points="8.4,96.0 9.5,85.8 19.8,77.5 33.3,79.6 57.2,78.6 63.4,83.5 77.9,88.9 95.5,93.1 95.5,96.0" fill="#182638"/>
<polygon points="8.2,94.7 46.3,94.7 55.3,108.7 61.5,124.3 65.7,138.8 67.0,144.0 27.1,144.0 25.0,138.8 16.7,122.2 10.5,108.7" fill="#1b2b40"/>
<polygon points="25.0,94.7 46.3,94.7 55.3,108.7 61.5,124.3 57.2,116.0 44.7,101.5" fill="#172538"/>
<polygon points="45.8,94.7 95.5,94.7 95.5,128.6 71.7,139.0 65.7,138.8 61.5,124.3 55.3,108.7" fill="#0f1824"/>
<polygon points="65.7,138.8 71.7,139.0 95.5,128.6 95.5,144.0 66.7,144.0" fill="#182436"/>
<polygon points="27.1,142.7 72.2,142.7 76.0,168.3 61.3,162.1 44.7,165.2 42.6,177.7 34.6,184.9 33.3,189.4 19.8,189.4 25.0,174.4 32.3,159.8" fill="#1b2b40"/>
<polygon points="71.7,142.7 95.5,142.7 95.5,189.4 90.3,189.4 88.3,181.8 82.0,174.6 76.0,168.3" fill="#0f1824"/>
<polygon points="44.7,165.2 53.0,162.5 61.3,162.1 73.9,170.4 57.2,174.6 43.7,176.6" fill="#5a7088"/>
<polygon points="53.0,162.9 69.6,167.1 71.9,170.4 57.2,168.1" fill="#d8c8b8"/>
<polygon points="61.3,161.9 71.7,165.5 76.3,168.6 75.3,170.4 70.6,167.6 61.3,163.5" fill="#0c0f14"/>
<polygon points="34.3,189.4 35.4,183.9 43.7,177.7 57.2,174.6 73.9,170.8 82.0,174.6 88.3,181.8 90.5,189.4" fill="#9b5636"/>
<polygon points="75.8,174.4 85.1,178.5 87.2,182.6 77.9,178.5" fill="#cf9a80"/>
<polygon points="73.7,184.9 92.4,183.9 92.4,189.4 73.7,189.4" fill="#4c4c4e"/>
<polygon points="94.6,142.7 121.2,142.7 126.2,164.0 138.6,184.7 139.9,189.4 94.6,189.4" fill="#142131"/>
<polygon points="95.1,149.5 101.3,142.7 110.7,142.7 107.5,189.4 95.1,189.4" fill="#18283c"/>
<polygon points="121.0,142.7 184.3,142.7 184.3,189.4 139.9,189.4 138.6,184.7 126.2,164.0" fill="#0b1018"/>
<polygon points="137.6,183.5 140.7,184.2 145.4,189.4 140.7,189.4" fill="#9a5a30"/>
<polygon points="167.7,187.0 184.3,186.6 184.3,189.4 167.7,189.4" fill="#6a3a1c"/>
<polygon points="94.6,97.8 128.3,97.8 126.2,108.7 122.3,122.4 107.5,128.4 94.6,129.5" fill="#101823"/>
<polygon points="110.7,98.4 129.3,99.4 126.2,108.7 109.6,120.1" fill="#182231"/>
<polygon points="94.6,129.5 107.5,128.4 102.4,140.9 94.6,144.0" fill="#162131"/>
<polygon points="167.7,94.7 184.3,94.7 184.3,125.3 146.9,131.7 153.2,126.4 161.4,108.7" fill="#121c2a"/>
<polygon points="168.9,94.7 180.3,94.7 171.3,102.7 166.8,102.5" fill="#ece6de"/>
<polygon points="163.5,103.3 169.9,103.5 166.6,107.9" fill="#b87850"/>
<polygon points="94.6,144.0 102.4,140.9 105.5,141.9 115.8,136.9 136.6,135.9 146.9,131.7 184.3,124.5 184.3,144.0" fill="#0f1824"/>
<polygon points="102.4,140.9 107.5,128.4 121.0,122.7 126.2,128.6 143.8,133.2 136.6,135.9 115.8,136.9 105.5,142.1" fill="#dcab88"/>
<polygon points="108.6,136.7 136.6,133.6 143.8,133.2 136.6,135.9 115.8,136.9" fill="#b87a52"/>
<polygon points="130.6,94.7 167.9,94.7 161.7,108.7 149.2,129.7 144.0,132.8 122.3,122.4 126.2,108.7" fill="#1a2637"/>
<polygon points="151.6,94.7 167.9,94.7 161.7,108.7 149.2,129.7 144.0,132.8 137.1,126.6" fill="#0d131d"/>
<polygon points="121.5,122.0 123.8,121.2 128.5,126.4 145.1,131.1 144.0,133.2 126.2,128.6" fill="#eef1f5"/>
<polygon points="151.6,122.7 157.5,126.4 153.4,128.6 149.2,128.6" fill="#dfe6ee"/>
<ellipse cx="144.9" cy="102.5" rx="1.8" ry="2.0" fill="#6c6c64"/>
<ellipse cx="142.0" cy="107.7" rx="1.8" ry="2.0" fill="#6c6c64"/>
<ellipse cx="138.8" cy="112.4" rx="1.8" ry="2.0" fill="#6c6c64"/>
<ellipse cx="136.3" cy="116.7" rx="1.8" ry="2.0" fill="#6c6c64"/>
<polygon points="-1.4,46.7 21.4,46.7 21.4,54.5 23.5,71.1 11.5,75.0 -1.4,74.4" fill="#8f5c3e"/>
<polygon points="-1.4,57.1 7.9,57.6 8.9,73.2 -1.4,74.0" fill="#b87a48"/>
<polygon points="20.9,54.3 50.9,57.4 57.4,78.4 33.3,79.6 23.2,71.3" fill="#84523a"/>
<polygon points="38.5,58.9 50.9,55.1 65.4,53.5 71.9,49.3 65.4,46.7 95.5,46.7 95.5,78.6 71.9,80.0 57.4,76.5 53.2,66.9 50.9,61.8 40.8,60.9" fill="#aa724a"/>
<polygon points="50.9,61.8 57.2,62.8 59.2,66.4 53.2,66.9" fill="#d9c2b2"/>
<polygon points="65.4,46.7 82.0,46.7 77.9,51.4 71.9,49.3" fill="#c48a5c"/>
<polygon points="59.2,40.9 65.7,39.7 73.9,44.0 85.1,48.0 57.2,48.0" fill="#b57c54"/>
<polygon points="102.9,59.5 147.5,60.1 144.9,68.0 138.6,78.4 134.7,85.8 103.4,77.5" fill="#864c2e"/>
<polygon points="102.9,59.5 147.5,60.1 146.4,63.8 103.2,63.3" fill="#9a5f3c"/>
<polygon points="94.6,57.6 103.4,57.8 103.6,72.1 94.6,71.9" fill="#c9c9c9"/>
<polygon points="94.6,71.1 104.0,71.3 104.0,83.1 94.6,82.9" fill="#3a3c40"/>
<ellipse cx="98.2" cy="76.8" rx="2.7" ry="3.1" fill="#b9a58c"/>
<polygon points="90.3,71.1 95.5,70.6 95.5,81.7 90.8,81.5" fill="#55575c"/>
<polyline points="-0.4,50.2 38.5,87.7" fill="none" stroke="#bdb9b0" stroke-width="1.900"/>
<polygon points="186.3,-2.8 182.0,-1.3 178.0,5.5 169.9,15.8 165.8,22.1 161.7,33.5 156.5,40.7 154.8,48.0 186.3,48.0" fill="#25374b"/>
<polygon points="186.3,-2.8 182.2,2.4 178.0,20.0 176.0,48.0 186.3,48.0" fill="#172333"/>
<polygon points="166.6,18.9 169.2,20.5 168.2,23.6 165.8,22.3" fill="#080c11"/>
<polygon points="154.4,46.7 150.3,57.6 145.1,68.0 138.8,78.4 134.7,88.7 133.5,96.0 184.3,96.0 184.3,46.7" fill="#223347"/>
<polygon points="167.7,46.7 184.3,46.7 184.3,96.0 157.3,96.0 165.6,73.2" fill="#152030"/>
<polygon points="180.3,78.4 184.3,77.1 184.3,96.0 169.9,96.0 177.2,86.6" fill="#e6e0d8"/>
<polygon points="181.4,77.3 184.3,76.3 184.3,96.0 182.7,96.0" fill="#161f2d"/>
</g>
</g>
</svg>
</svg>
<div class="abs" style="left:551px;top:404.900px;width:32px;height:1.500px;background:#a2a6ab"></div>
<div class="abs" style="left:157.500px;top:419.800px;width:818.300px;height:31.800px;border-radius:4px;background:#edf2fa"></div>
<div class="t" style="left:168px;top:429px;font-size:9.750px;color:#3c4043">Click to add speaker notes</div>
<!-- context menu -->
<div id="cm">
<div class="mi dis" style="top:4.85px"><svg class="ic" style="left:8.300px;top:4.65px;width:12.400px;height:12.400px" viewBox="0 0 24 24"><path fill="#b9bcc0" d="M9.64 7.64c.23-.5.36-1.05.36-1.64 0-2.21-1.79-4-4-4S2 3.790 2 6s1.79 4 4 4c.59 0 1.14-.13 1.64-.36L10 12l-2.36 2.36C7.14 14.13 6.59 14 6 14c-2.21 0-4 1.79-4 4s1.79 4 4 4 4-1.79 4-4c0-.59-.13-1.14-.36-1.64L12 14l7 7h3v-1L9.64 7.64zM6 8c-1.1 0-2-.89-2-2s.9-2 2-2 2 .89 2 2-.9 2-2 2zm0 12c-1.1 0-2-.89-2-2s.9-2 2-2 2 .89 2 2-.9 2-2 2zm6-7.500c-.28 0-.5-.22-.5-.5s.22-.5.5-.5.5.22.5.5-.22.5-.5.5zM19 3l-6 6 2 2 7-7V3z"/></svg><span class="lab">Cut</span><span class="sc">Ctrl+X</span></div>
<div class="mi dis" style="top:25.85px"><svg class="ic" style="left:8.300px;top:4.65px;width:12.400px;height:12.400px" viewBox="0 0 24 24"><path fill="#b9bcc0" transform="translate(0 24) scale(1 -1)" d="M16 1H4c-1.1 0-2 .9-2 2v14h2V3h12V1zm3 4H8c-1.1 0-2 .9-2 2v14c0 1.1.9 2 2 2h11c1.1 0 2-.9 2-2V7c0-1.1-.9-2-2-2zm0 16H8V7h11v14z"/></svg><span class="lab">Copy</span><span class="sc">Ctrl+C</span></div>
<div class="mi " style="top:47.15px"><svg class="ic" style="left:8.300px;top:4.65px;width:12.400px;height:12.400px" viewBox="0 0 24 24"><path fill="#3c4043" d="M19 2h-4.180C14.4.84 13.3 0 12 0c-1.3 0-2.4.84-2.820 2H5c-1.1 0-2 .9-2 2v16c0 1.1.9 2 2 2h14c1.1 0 2-.9 2-2V4c0-1.1-.9-2-2-2zm-7 0c.55 0 1 .45 1 1s-.45 1-1 1-1-.45-1-1 .45-1 1-1zm7 18H5V4h2v3h10V4h2v16z"/></svg><span class="lab">Paste</span><span class="sc">Ctrl+V</span></div>
<div class="mi " style="top:68.45px"><svg class="ic" style="left:8.300px;top:4.65px;width:12.400px;height:12.400px" viewBox="0 0 24 24"><path fill="#3c4043" d="M19 2h-4.180C14.4.84 13.3 0 12 0c-1.3 0-2.4.84-2.820 2H5c-1.1 0-2 .9-2 2v16c0 1.1.9 2 2 2h5v-2H5V4h2v3h10V4h2v6h2V4c0-1.1-.9-2-2-2zm-7 0c.55 0 1 .45 1 1s-.45 1-1 1-1-.45-1-1 .45-1 1-1zM12 12v2h2.600l-2.600 2.600 1.400 1.400 2.600-2.600 0 2.600h2v-6zM17.500 18.500l3.500 3.500 1.400-1.400-3.500-3.500z"/></svg><span class="lab">Paste without formatting</span><span class="sc">Ctrl+Shift+V</span></div>
<div class="mi dis" style="top:89.75px"><svg class="ic" style="left:8.300px;top:4.65px;width:12.400px;height:12.400px" viewBox="0 0 24 24"><path fill="#b9bcc0" d="M6 19c0 1.1.9 2 2 2h8c1.1 0 2-.9 2-2V7H6v12zM8 9h8v10H8V9zm7.500-5l-1-1h-5l-1 1H5v2h14V4h-3.500zM9.700 10.500h1.600v7H9.700zm3 0h1.600v7h-1.600z"/></svg><span class="lab">Delete</span></div>
<div class="mi " style="top:122.25px"><svg class="ic" style="left:8.300px;top:5.25px;width:12.400px;height:12.400px" viewBox="0 0 24 24"><path fill="#3c4043" d="M19 13h-6v6h-2v-6H5v-2h6V5h2v6h6v2z"/></svg><span class="lab">Insert row above</span></div>
<div class="mi " style="top:143.55px"><svg class="ic" style="left:8.300px;top:5.25px;width:12.400px;height:12.400px" viewBox="0 0 24 24"><path fill="#3c4043" d="M19 13h-6v6h-2v-6H5v-2h6V5h2v6h6v2z"/></svg><span class="lab">Insert row below</span></div>
<div class="mi " style="top:164.85px"><svg class="ic" style="left:8.300px;top:5.25px;width:12.400px;height:12.400px" viewBox="0 0 24 24"><path fill="#3c4043" d="M19 13h-6v6h-2v-6H5v-2h6V5h2v6h6v2z"/></svg><span class="lab">Insert column left</span></div>
<div class="mi " style="top:186.15px"><svg class="ic" style="left:8.300px;top:5.25px;width:12.400px;height:12.400px" viewBox="0 0 24 24"><path fill="#3c4043" d="M19 13h-6v6h-2v-6H5v-2h6V5h2v6h6v2z"/></svg><span class="lab">Insert column right</span></div>
<div class="mi hl" style="top:218.85px"><svg class="ic" style="left:8.300px;top:4.65px;width:12.400px;height:12.400px" viewBox="0 0 24 24"><path fill="#3c4043" d="M6 19c0 1.1.9 2 2 2h8c1.1 0 2-.9 2-2V7H6v12zM8 9h8v10H8V9zm7.500-5l-1-1h-5l-1 1H5v2h14V4h-3.500zM9.700 10.500h1.600v7H9.700zm3 0h1.600v7h-1.600z"/></svg><span class="lab">Delete row</span></div>
<div class="mi " style="top:240.15px"><svg class="ic" style="left:8.300px;top:4.65px;width:12.400px;height:12.400px" viewBox="0 0 24 24"><path fill="#3c4043" d="M6 19c0 1.1.9 2 2 2h8c1.1 0 2-.9 2-2V7H6v12zM8 9h8v10H8V9zm7.500-5l-1-1h-5l-1 1H5v2h14V4h-3.500zM9.700 10.500h1.600v7H9.700zm3 0h1.600v7h-1.600z"/></svg><span class="lab">Delete column</span></div>
<div class="mi " style="top:261.45px"><svg class="ic" style="left:8.300px;top:4.65px;width:12.400px;height:12.400px" viewBox="0 0 24 24"><path fill="#3c4043" d="M6 19c0 1.1.9 2 2 2h8c1.1 0 2-.9 2-2V7H6v12zM8 9h8v10H8V9zm7.500-5l-1-1h-5l-1 1H5v2h14V4h-3.500zM9.700 10.500h1.600v7H9.700zm3 0h1.600v7h-1.600z"/></svg><span class="lab">Delete table</span></div>
<div class="mi " style="top:293.95px"><svg class="ic" style="left:8.300px;top:4.65px;width:12.400px;height:12.400px" viewBox="0 0 24 24"><path fill="#3c4043" d="M4 2.500h16v2H4zm0 17h16v2H4z M12 6.300l3.700 3.700h-2.600v4h2.600l-3.700 3.700l-3.700-3.700h2.600v-4H8.300z"/></svg><span class="lab">Distribute rows</span></div>
<div class="mi " style="top:315.25px"><svg class="ic" style="left:8.300px;top:4.65px;width:12.400px;height:12.400px" viewBox="0 0 24 24"><path fill="#3c4043" d="M2.500 4h2v16h-2zm17 0h2v16h-2z M6.300 12l3.700-3.700v2.600h4V8.300l3.700 3.700l-3.700 3.700v-2.600h-4v2.600z"/></svg><span class="lab">Distribute columns</span></div>
<div class="mi " style="top:347.75px"><svg class="ic" style="left:8.300px;top:4.65px;width:12.400px;height:12.400px" viewBox="0 0 24 24"><path fill="#3c4043" d="M18 2H6c-1.100 0-2 .9-2 2v7c0 1.100.9 2 2 2h3v2.500h-1v2h1.500V22h5v-4.500H16v-2h-1V13h3c1.100 0 2-.9 2-2V4c0-1.100-.9-2-2-2zm0 9H6V9h12v2zm0-4H6V4h7v2h2V4h3v3z"/></svg><span class="lab">Format options</span></div>
<div class="mi " style="top:380.25px"><svg class="ic" style="left:8.300px;top:4.65px;width:12.400px;height:12.400px" viewBox="0 0 24 24"><path fill="#3c4043" d="M12 22C6.490 22 2 17.510 2 12S6.490 2 12 2s10 4.040 10 9c0 3.310-2.690 6-6 6h-1.770c-.28 0-.5.22-.5.5 0 .12.050.23.130.33.410.47.640 1.060.640 1.670A2.500 2.500 0 0 1 12 22zm0-18c-4.410 0-8 3.590-8 8s3.590 8 8 8c.28 0 .5-.22.5-.5a.540.540 0 0 0-.14-.35c-.41-.46-.63-1.050-.63-1.650a2.500 2.500 0 0 1 2.500-2.500H16c2.210 0 4-1.790 4-4 0-3.860-3.590-7-8-7z M5 11.500a1.500 1.500 0 1 0 3 0a1.500 1.500 0 1 0-3 0z M8 7.500a1.500 1.500 0 1 0 3 0a1.500 1.500 0 1 0-3 0z M13 7.500a1.500 1.500 0 1 0 3 0a1.500 1.500 0 1 0-3 0z M16 11.500a1.500 1.500 0 1 0 3 0a1.500 1.500 0 1 0-3 0z"/></svg><span class="lab">Add to theme</span><span class="sc" style="font-size:8px;top:6.400px;right:10.600px;color:#80868b;transform:none;font-family:'DejaVu Sans',sans-serif">▸</span></div>
<div class="msep" style="top:116.10px"></div>
<div class="msep" style="top:213.10px"></div>
<div class="msep" style="top:288.00px"></div>
<div class="msep" style="top:341.40px"></div>
<div class="msep" style="top:374.30px"></div>
</div>
<svg class="ic" style="left:822.700px;top:290px;width:10.500px;height:14px" viewBox="0 0 22 29"><path d="M7.500 2.500a2 2 0 0 1 4 0v9.500l.8-.3a2 2 0 0 1 3 .8l.7-.2a2 2 0 0 1 2.700 1.200l.4 0a2 2 0 0 1 2 2.200v5c0 4-2.500 7-7 7h-2c-3 0-4.500-1.500-6-4l-4.500-7.500c-.8-1.600 1.200-3 2.600-1.700l3.300 3.200z" fill="#fff" stroke="#555" stroke-width="1.800" stroke-linejoin="round"/><path d="M11.500 12.500v5M15 13.500v4M18.300 14.500v3.500" stroke="#666" stroke-width="1.300" fill="none"/></svg>
<!-- side panel -->
<svg class="ic" style="left:999px;top:51.300px;width:12.600px;height:12.600px" viewBox="0 0 24 24"><path d="M5 0h14l5 5v14l-5 5H5l-5-5V5z" fill="#fff"/><path d="M0 5a5 5 0 0 1 5-5h14v5.500H5.500V19H0z" fill="#4285f4"/><path d="M19 0v5.500h5V2a2 2 0 0 0-2-2z" fill="#1967d2"/><path d="M18.500 5.500H24V19h-5.500z" fill="#fbbc04"/><path d="M5.500 18.500h13V24H5.500z" fill="#34a853"/><path d="M0 18.500h5.500V24H2a2 2 0 0 1-2-2z" fill="#188038"/><path d="M18.500 18.500H24L18.500 24z" fill="#ea4335"/><rect x="5.500" y="5.500" width="13" height="13" fill="#fff"/><text x="12" y="15.800" font-size="9.500" font-weight="bold" text-anchor="middle" fill="#4285f4" font-family="Liberation Sans, Arial, sans-serif">31</text></svg>
<svg class="ic" style="left:999px;top:88.500px;width:12.600px;height:12.600px" viewBox="0 0 24 24"><rect x="0.500" y="0.500" width="23" height="23" rx="2.500" fill="#fbbc04"/><path d="M12 5a4.600 4.600 0 0 0-2.600 8.400V15.500h5.200v-2.100A4.600 4.600 0 0 0 12 5zM9.800 17h4.400v1.800H9.800z" fill="#fff"/></svg>
<svg class="ic" style="left:999.300px;top:125.500px;width:12.600px;height:12.600px" viewBox="0 0 24 24"><circle cx="11" cy="13" r="8.200" fill="none" stroke="#1a73e8" stroke-width="3"/><path d="M7.300 12.500l3.200 3.200 6-6.500" fill="none" stroke="#1a73e8" stroke-width="2.800"/><circle cx="20" cy="4.500" r="2.600" fill="#1a73e8"/></svg>
<svg class="ic" style="left:999.300px;top:163.300px;width:12.600px;height:12.600px" viewBox="0 0 24 24"><circle cx="12" cy="6" r="5" fill="#1a73e8"/><path d="M2.500 22v-6c0-3 3-4.500 9.500-4.500s9.500 1.500 9.500 4.500v6z" fill="#1a73e8"/><path d="M2.500 15.500h19v3h-19z" fill="#185abc" opacity=".45"/></svg>
<svg class="ic" style="left:1000.200px;top:199.800px;width:10.600px;height:14.400px" viewBox="0 0 18 26"><path d="M9 0a9 9 0 0 0-9 9c0 6 6 9 9 17 3-8 9-11 9-17a9 9 0 0 0-9-9z" fill="#34a853"/><path d="M9 0a9 9 0 0 0-6.900 3.200L9 9z" fill="#ea4335"/><path d="M2.100 3.200A9 9 0 0 0 .8 12.600L9 9z" fill="#1a73e8"/><path d="M9 0a9 9 0 0 1 8 4.900L9 9z" fill="#4285f4"/><path d="M17 4.900a9 9 0 0 1 .2 7.600L9 9z" fill="#fbbc04"/><circle cx="9" cy="9" r="3.200" fill="#fff"/></svg>
<div class="abs" style="left:999px;top:236.600px;width:13px;height:1px;background:#dadce0"></div>
<svg class="ic" style="left:999.10px;top:259.50px;width:13px;height:13px" viewBox="0 0 24 24"><path fill="#1f1f1f" d="M19 13h-6v6h-2v-6H5v-2h6V5h2v6h6v2z"/></svg>
<svg class="ic" style="left:999.70px;top:438.70px;width:12px;height:12px" viewBox="0 0 24 24"><path fill="#444746" d="M10 6L8.59 7.41 13.17 12l-4.58 4.59L10 18l6-6z"/></svg>
</div>
</body></html>
